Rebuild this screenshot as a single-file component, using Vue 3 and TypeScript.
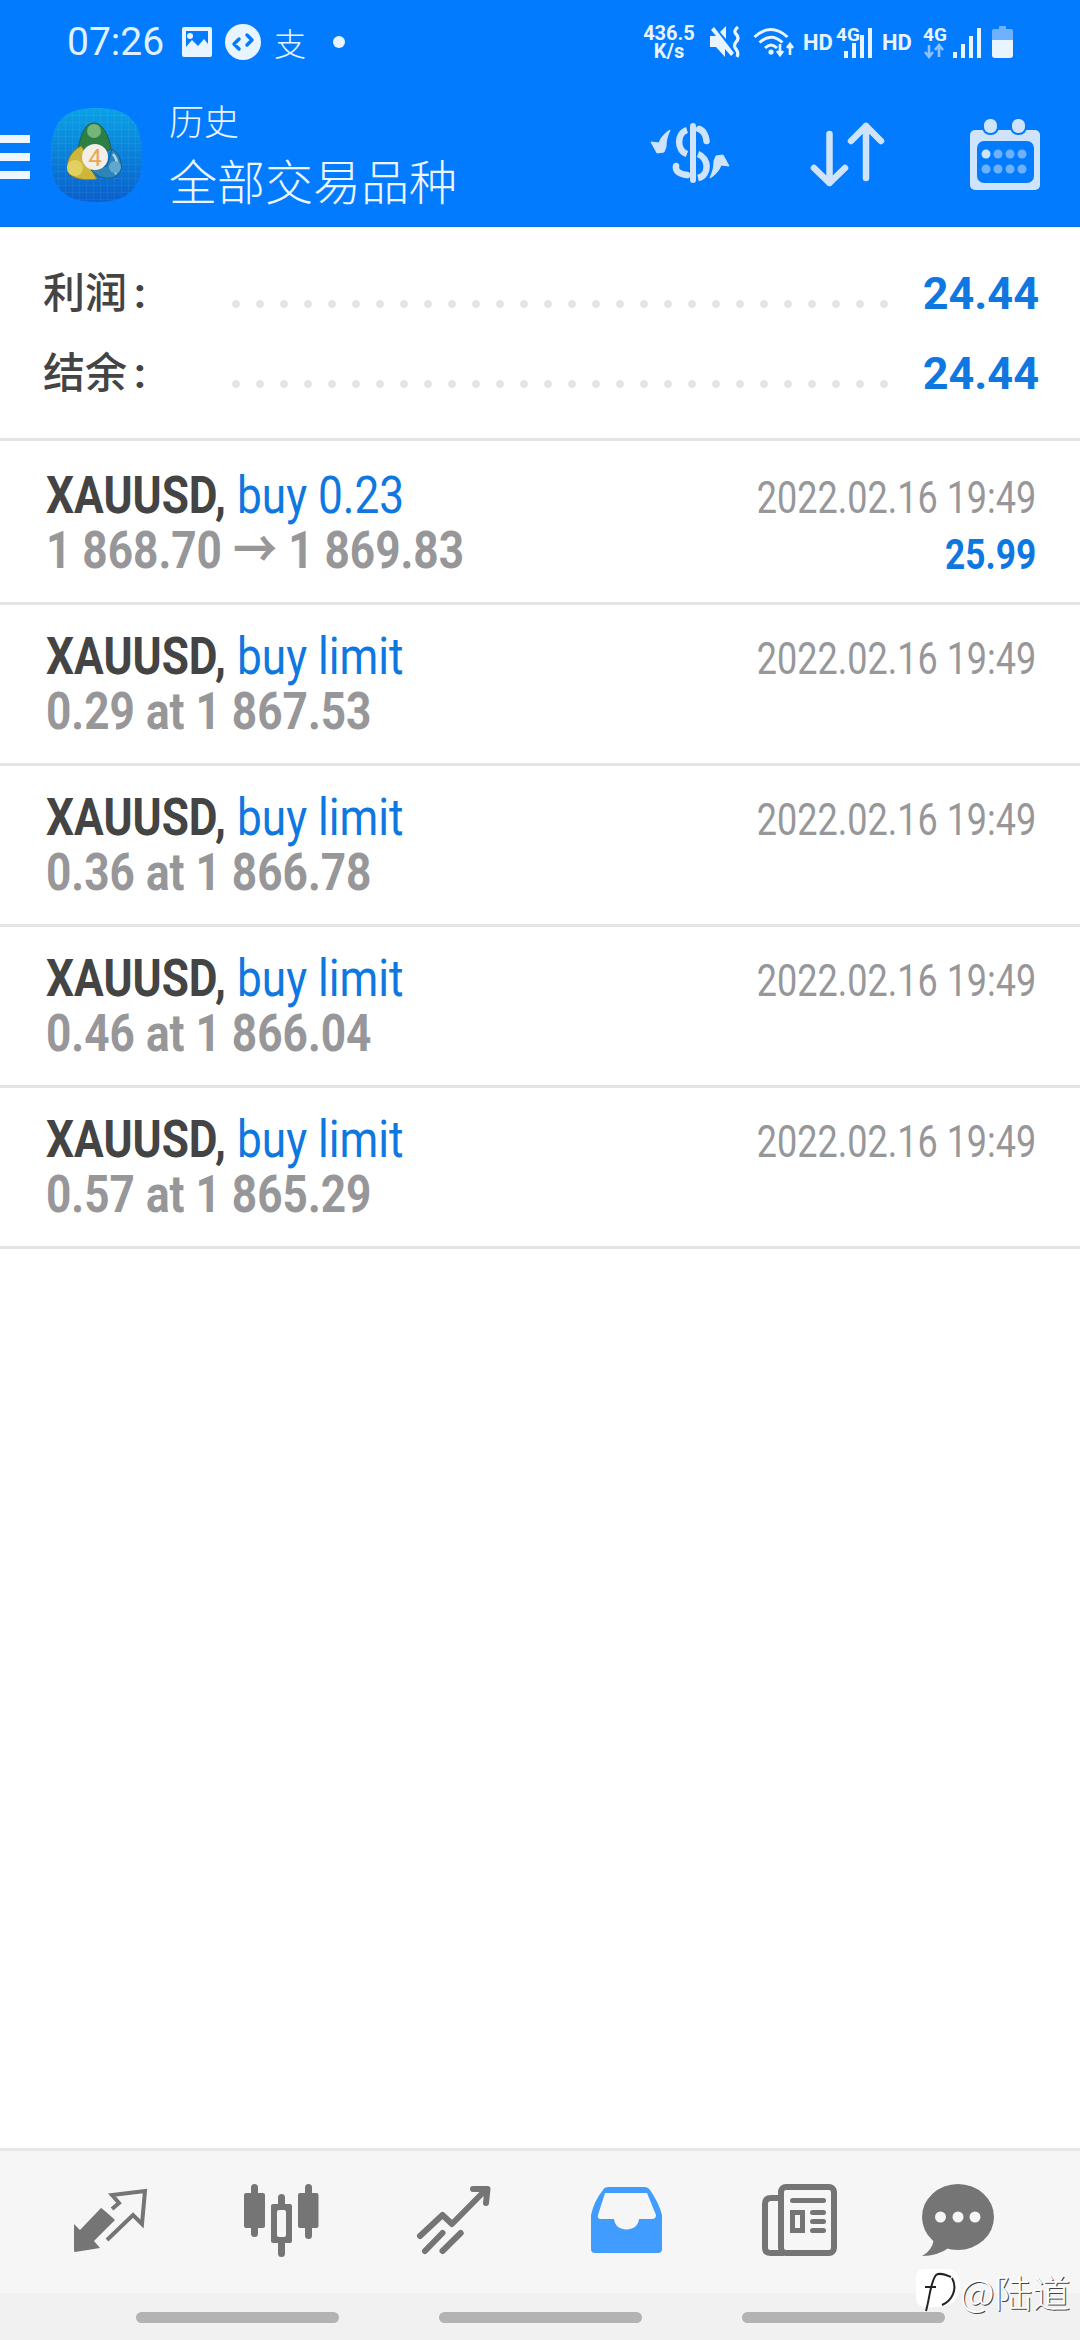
<script setup lang="ts">
interface Row { action: string; detail: string; amount?: string }
const rows: Row[] = [
  { action: 'buy 0.23', detail: '1 868.70 → 1 869.83', amount: '25.99' },
  { action: 'buy limit', detail: '0.29 at 1 867.53' },
  { action: 'buy limit', detail: '0.36 at 1 866.78' },
  { action: 'buy limit', detail: '0.46 at 1 866.04' },
  { action: 'buy limit', detail: '0.57 at 1 865.29' }
]
const summary = [
  { label: '利润', value: '24.44' },
  { label: '结余', value: '24.44' }
]
const pills = [0, 1, 2]
</script>

<template>
  <div class="page">
    <header class="header">
      <div class="status">
        <div class="status-left">
          <span class="time">07:26</span>
          <svg class="ic-image" width="30" height="30" viewBox="0 0 30 30">
            <path fill-rule="evenodd" fill="#e8f4ff" d="M2 0H28Q30 0 30 2V28Q30 30 28 30H2Q0 30 0 28V2Q0 0 2 0ZM4 4V20L10 13L16 19L22 12L26 17V4ZM8 6A3 3 0 1 1 8 12A3 3 0 1 1 8 6Z" />
          </svg>
          <svg class="ic-circle" width="36" height="36" viewBox="0 0 36 36">
            <circle cx="18" cy="18" r="18" fill="#e8f4ff" />
            <path d="M9 20L14 25M9 20L14 15M27 16L22 11M27 16L22 21" stroke="#037bff" stroke-width="3.5" fill="none" stroke-linecap="round" />
          </svg>
          <span class="zhi">支</span>
          <span class="dot"></span>
        </div>
        <div class="status-right">
          <div class="speed"><span>436.5</span><span>K/s</span></div>
          <svg class="ic-mute" width="33" height="32" viewBox="0 0 33 32">
            <path fill="#e8f4ff" d="M0 10H6L1 4L4 1L24 27L21 30L15 23V31L6 21H0ZM10 6L16 0V13Z" />
            <path d="M28 1Q23 5 26 8Q30 12 26 16Q23 20 26 23Q29 27 27 31" stroke="#e8f4ff" stroke-width="3.2" fill="none" />
          </svg>
          <svg class="ic-wifi" width="42" height="30" viewBox="0 0 42 30">
            <path d="M1.5 10Q18 -5 34.5 10M6.5 15.5Q18 5 29.5 15.5M12 21Q18 15 24 21" stroke="#e8f4ff" stroke-width="3" fill="none" />
            <circle cx="18" cy="25" r="2.6" fill="#e8f4ff" />
            <path d="M27 17V27M24 24L27 28L30 24M37 28V18M34 21L37 17L40 21" stroke="#e8f4ff" stroke-width="2.6" fill="none" />
          </svg>
          <span class="hd hd1">HD</span>
          <svg class="ic-sig1" width="36" height="40" viewBox="0 -4 36 40">
            <text x="0" y="15" class="sig-text">4G</text>
            <rect x="8" y="25" width="4" height="7" fill="#e8f4ff" />
            <rect x="16" y="17" width="4" height="15" fill="#e8f4ff" />
            <rect x="24" y="9" width="4" height="23" fill="#e8f4ff" />
            <rect x="32" y="2" width="4" height="30" fill="#e8f4ff" />
          </svg>
          <span class="hd hd2">HD</span>
          <svg class="ic-sig2" width="58" height="40" viewBox="0 -4 58 40">
            <text x="0" y="15" class="sig-text">4G</text>
            <path d="M6 19V30M2 26L6 31L10 26M16 31V20M12 24L16 19L20 24" stroke="#8fc1ff" stroke-width="2.6" fill="none" />
            <rect x="30" y="26" width="4" height="6" fill="#e8f4ff" />
            <rect x="38" y="18" width="4" height="14" fill="#e8f4ff" />
            <rect x="46" y="10" width="4" height="22" fill="#e8f4ff" />
            <rect x="54" y="2" width="4" height="30" fill="#e8f4ff" />
          </svg>
          <svg class="ic-batt" width="21" height="32" viewBox="0 0 21 32">
            <path fill="#6fb0ff" d="M7 0H14V3H19Q21 3 21 5V14H0V5Q0 3 2 3H7Z" />
            <path fill="#eaf4ff" d="M0 14H21V29Q21 32 18 32H3Q0 32 0 29Z" />
          </svg>
        </div>
      </div>
      <div class="appbar">
        <div class="burger"><i></i><i></i><i></i></div>
        <svg class="logo" width="91" height="94" viewBox="0 0 91 94">
          <defs>
            <linearGradient id="lg" x1="0" y1="0" x2="0" y2="1">
              <stop offset="0" stop-color="#0aa2e6" />
              <stop offset="1" stop-color="#0a5fcb" />
            </linearGradient>
            <pattern id="grid" width="7" height="7" patternUnits="userSpaceOnUse">
              <path d="M7 0H0V7" fill="none" stroke="#ffffff" stroke-opacity="0.1" />
            </pattern>
          </defs>
          <path fill="url(#lg)" d="M45.5 0C79 0 91 14 91 47C91 80 79 94 45.5 94C12 94 0 80 0 47C0 14 12 0 45.5 0Z" />
          <path fill="url(#grid)" d="M45.5 0C79 0 91 14 91 47C91 80 79 94 45.5 94C12 94 0 80 0 47C0 14 12 0 45.5 0Z" />
          <path fill="#2e7f46" stroke="#1f5f46" d="M43 15C52 15 58 28 60 41L44 48L27 42C29 28 34 15 43 15Z" />
          <circle cx="43" cy="23" r="7" fill="#74b57a" />
          <path fill="#cdb63a" stroke="#8c7f2a" d="M30 38C36 44 38 60 46 71C34 73 20 71 17 63C14 54 20 43 30 38Z" />
          <circle cx="24" cy="60" r="8" fill="#e2d060" />
          <path fill="#2d84b8" stroke="#155f8c" d="M61 41C70 46 73 60 68 66C60 73 48 71 40 62L56 58Z" />
          <path fill="none" stroke="#a9d5ea" stroke-width="2.5" d="M62 46C67 52 68 60 64 66" />
          <circle cx="64" cy="59" r="6" fill="#5fa7cf" />
          <circle cx="44" cy="49" r="13" fill="#f3efe8" />
          <text x="44" y="58" class="logo-four">4</text>
        </svg>
        <div class="titles">
          <div class="t1">历史</div>
          <div class="t2">全部交易品种</div>
        </div>
        <svg class="ic-dollar" width="100" height="85" viewBox="0 0 100 85">
          <rect x="50" y="13" width="6" height="60" rx="3" fill="#cfe3fb" />
          <g fill="none" stroke="#cfe3fb" stroke-width="6.5">
            <path d="M47 20C37 23 36 40 47 44" />
            <path d="M59 19C63 20 66 25 66.5 31" stroke-linecap="round" />
            <path d="M36 56C35 61 39 64 47 65" stroke-linecap="round" />
            <path d="M58 44C69 48 70 65 58 68" />
          </g>
          <g fill="#cfe3fb" stroke="#cfe3fb" stroke-width="1" stroke-linejoin="round">
            <path d="M11 32L19 33C21 27 25 23 30 20C27 27 26 31 26 37L24 42L17 43Z" />
            <path d="M11 32L19 33C21 27 25 23 30 20C27 27 26 31 26 37L24 42L17 43Z" transform="rotate(180 50 44)" />
          </g>
        </svg>
        <svg class="ic-sort" width="80" height="70" viewBox="0 0 80 70">
          <path d="M21.5 14V63M6 48L21.5 63L37 48M58 58V6M43 21L58 6L73 21" stroke="#cfe3fb" stroke-width="6.5" fill="none" stroke-linecap="round" stroke-linejoin="round" />
        </svg>
        <svg class="ic-cal" width="70" height="72" viewBox="0 0 70 72">
          <rect x="0" y="12" width="70" height="60" rx="5" fill="#cfe3fb" />
          <rect x="7" y="23" width="57" height="42" rx="7" fill="#037bff" />
          <rect x="13" y="0" width="15" height="16" rx="7" fill="#cfe3fb" stroke="#037bff" stroke-width="2" />
          <rect x="41" y="0" width="15" height="16" rx="7" fill="#cfe3fb" stroke="#037bff" stroke-width="2" />
          <circle cx="16" cy="36" r="4.5" fill="#cfe3fb" />
          <circle cx="28" cy="36" r="4.5" fill="#6fb0fb" />
          <circle cx="40" cy="36" r="4.5" fill="#6fb0fb" />
          <circle cx="52" cy="36" r="4.5" fill="#6fb0fb" />
          <circle cx="16" cy="51" r="4.5" fill="#6fb0fb" />
          <circle cx="28" cy="51" r="4.5" fill="#6fb0fb" />
          <circle cx="40" cy="51" r="4.5" fill="#6fb0fb" />
          <circle cx="52" cy="51" r="4.5" fill="#6fb0fb" />
        </svg>
      </div>
    </header>

    <section class="summary">
      <div v-for="s in summary" :key="s.label" class="sum-row">
        <span class="sum-label">{{ s.label }}<b class="colon">:</b></span>
        <span class="sum-dots"></span>
        <span class="sum-value">{{ s.value }}</span>
      </div>
    </section>

    <section class="list">
      <div v-for="(r, i) in rows" :key="i" class="row" :class="{ first: i === 0 }">
        <div class="row-left">
          <div class="line"><b class="sym">XAUUSD,</b> <span class="act">{{ r.action }}</span></div>
          <div class="line detail">{{ r.detail }}</div>
        </div>
        <div class="row-right">
          <div class="date">2022.02.16 19:49</div>
          <div v-if="r.amount" class="amount">{{ r.amount }}</div>
        </div>
      </div>
    </section>

    <div class="spacer"></div>

    <nav class="tabs">
      <svg width="100" height="90" viewBox="0 0 100 90">
        <path fill="#757575" d="M14 49L20 55L41 33Q42 33 55 45L34 66L40 73L15 77Q14 77 14 75Z" />
        <path d="M52 34L59 28L52 20L85 16L82 49L73 40L47 65" fill="none" stroke="#757575" stroke-width="4" />
      </svg>
      <svg width="100" height="90" viewBox="0 0 100 90">
        <g fill="#757575">
          <rect x="12" y="18" width="21" height="35" rx="2" />
          <rect x="19" y="9" width="7" height="53" rx="3.5" />
          <rect x="66" y="18" width="20.5" height="35" rx="2" />
          <rect x="73" y="9" width="7" height="55" rx="3.5" />
          <rect x="46" y="19" width="7" height="63" rx="3.5" />
          <rect x="39" y="29" width="21" height="39" rx="2" />
        </g>
        <rect x="45" y="35" width="9" height="27" rx="2" fill="#f6f6f6" />
      </svg>
      <svg width="100" height="90" viewBox="0 0 100 90">
        <path d="M16 61L38.5 40L48 49L81.5 15M69 14H83.5L82 28M21 76L38.5 58M38.5 76L56.7 58" fill="none" stroke="#757575" stroke-width="6" stroke-linecap="round" stroke-linejoin="round" />
      </svg>
      <svg width="100" height="90" viewBox="0 0 100 90">
        <g transform="translate(15 12)">
          <path fill="#409cff" d="M12 3Q13 0 18 0H53Q57 0 59 3Q68 16 71 28V62Q71 66 67 66H4Q0 66 0 62V28Q3 14 12 3Z" />
          <path fill="#f6f6f6" d="M14 6H56L65 28Q65 32 61 32H48C47 46 24 46 23 32H10Q6 32 7 28Z" />
        </g>
      </svg>
      <svg width="100" height="90" viewBox="0 0 100 90">
        <rect x="33" y="12" width="53" height="66" rx="5" fill="none" stroke="#757575" stroke-width="6" />
        <path d="M30 23H23Q17 23 17 29V73Q17 78 23 78H36" fill="none" stroke="#757575" stroke-width="6" />
        <g fill="#757575">
          <rect x="42" y="23" width="36" height="5" rx="2.5" />
          <path fill-rule="evenodd" d="M42 35H57V58H42ZM47 40V53H52V40Z" />
          <rect x="62" y="35" width="16" height="5" rx="2.5" />
          <rect x="62" y="44" width="16" height="5" rx="2.5" />
          <rect x="62" y="53" width="16" height="5" rx="2.5" />
        </g>
      </svg>
      <svg width="100" height="90" viewBox="0 0 100 90">
        <ellipse cx="38" cy="42" rx="36" ry="33" fill="#757575" />
        <path fill="#757575" d="M14 64Q12 76 2 81Q18 81 30 72Z" />
        <g fill="#f6f6f6">
          <circle cx="20.5" cy="42" r="5.5" />
          <circle cx="38" cy="42" r="5.5" />
          <circle cx="55" cy="42" r="5.5" />
        </g>
      </svg>
      <div class="mark">
        <svg width="44" height="44" viewBox="0 0 44 44">
          <path fill="#fff" d="M10 0H30C40 0 44 6 44 16C44 30 36 38 20 38H10C3 38 0 34 0 28V10C0 3 3 0 10 0Z" />
          <path d="M10 42C14 28 14 14 20 6C24 3 30 6 35 8M9 18H20M36 9C42 20 36 32 26 36" fill="none" stroke="#222" stroke-width="2" />
        </svg>
        <span class="mark-text">@陆道</span>
      </div>
    </nav>

    <div class="nav">
      <span v-for="p in pills" :key="p" class="pill"></span>
    </div>
  </div>
</template>

<style>
html, body { margin: 0; background: #fff; }
</style>

<style scoped>
.page {
  width: 1080px;
  height: 2340px;
  display: flex;
  flex-direction: column;
  overflow: hidden;
  background: #fff;
  font-family: Roboto, "Noto Sans CJK SC", sans-serif;
}
.header {
  height: 227px;
  box-sizing: border-box;
  background: #037bff;
  border-bottom: 1px solid #0a6fd8;
  flex: none;
}
.status {
  height: 84px;
  display: flex;
  justify-content: space-between;
  align-items: center;
  padding: 0 67px;
}
.status-left, .status-right { display: flex; align-items: center; }
.time { color: #dff1ff; font-size: 39px; width: 115px; }
.ic-circle { margin-left: 13px; }
.zhi { margin-left: 13px; color: #e8f4ff; font-size: 32px; width: 32px; font-family: "Noto Sans CJK SC", sans-serif; font-weight: 300; }
.dot { margin-left: 27px; width: 12px; height: 12px; border-radius: 50%; background: #e8f4ff; }
.speed {
  width: 52px;
  color: #e8f4ff;
  font-size: 20px;
  font-weight: 700;
  line-height: 18px;
  text-align: center;
}
.speed span { display: block; }
.ic-mute { margin-left: 15px; }
.ic-wifi { margin-left: 10px; }
.hd { color: #e8f4ff; font-size: 22px; font-weight: 700; width: 27px; }
.hd1 { margin-left: 8px; }
.ic-sig1 { margin-left: 6px; }
.hd2 { margin-left: 10px; }
.ic-sig2 { margin-left: 14px; }
.ic-batt { margin-left: 11px; }
.sig-text { fill: #e8f4ff; font-size: 19px; font-weight: 700; font-family: Roboto, sans-serif; }

.appbar {
  height: 142px;
  display: flex;
  align-items: flex-start;
  position: relative;
}
.burger { width: 30px; margin-top: 51px; display: flex; flex-direction: column; gap: 10px; }
.burger i { display: block; height: 8px; background: #eef6ff; }
.logo { margin: 24px 0 0 21px; flex: none; }
.titles { margin-left: 27px; width: 471px; color: #eef6ff; font-family: "Noto Sans CJK SC", sans-serif; font-weight: 300; }
.t1 { font-size: 35px; line-height: 40px; margin-top: 16px; }
.t2 { font-size: 48px; line-height: 60px; margin-top: 9px; }
.logo-four { font-size: 24px; fill: #eca653; text-anchor: middle; font-family: Roboto, sans-serif; }
.ic-dollar { margin-top: 26px; flex: none; }
.ic-sort { margin: 36px 0 0 68px; flex: none; }
.ic-cal { margin: 34px 0 0 82px; flex: none; }

.summary {
  height: 214px;
  box-sizing: border-box;
  padding-top: 26px;
  border-bottom: 3px solid #e4e4e4;
  flex: none;
}
.sum-row { height: 80px; display: flex; align-items: center; padding: 0 41px 0 43px; }
.sum-label {
  width: 181px;
  margin-top: -8px;
  font-family: "Noto Sans CJK SC", sans-serif;
  font-weight: 500;
  font-size: 42px;
  color: #444;
}
.colon { font-weight: 700; margin-left: 7px; font-family: Roboto, sans-serif; }
.sum-dots {
  width: 672px;
  height: 8px;
  margin-top: 22px;
  background: radial-gradient(circle, #e4e4e4 3.5px, transparent 4.2px) 0 0 / 24px 8px repeat-x;
}
.sum-value { margin-left: auto; font-size: 45px; font-weight: 700; color: #0f78e0; }

.list { flex: none; }
.row {
  height: 161px;
  box-sizing: border-box;
  border-bottom: 3px solid #e4e4e4;
  padding: 24px 44px 0 46px;
  display: flex;
  justify-content: space-between;
}
.row.first { height: 164px; padding-top: 27px; }
.row-left { width: 600px; }
.line {
  height: 55px;
  line-height: 55px;
  font-size: 52px;
  white-space: nowrap;
  transform: scaleX(0.85);
  transform-origin: left center;
}
.sym { color: #444; font-weight: 700; }
.act { color: #0f78e0; font-weight: 400; }
.detail { color: #97979a; font-weight: 700; }
.row-right { text-align: right; margin-top: 2px; }
.date {
  font-size: 45px;
  line-height: 56px;
  color: #97979a;
  white-space: nowrap;
  transform: scaleX(0.8);
  transform-origin: right center;
}
.amount {
  font-size: 42px;
  line-height: 58px;
  font-weight: 700;
  color: #0f78e0;
  transform: scaleX(0.84);
  transform-origin: right center;
}
.spacer { flex: 1; }
.tabs {
  position: relative;
  height: 145px;
  box-sizing: border-box;
  flex: none;
  background: #f6f6f6;
  border-top: 3px solid #e6e6e6;
  padding: 24px 0 0 60px;
  display: grid;
  grid-template-columns: repeat(6, 172px);
  align-content: start;
}
.mark {
  position: absolute;
  left: 916px;
  top: 112px;
  display: flex;
  align-items: center;
}
.mark-text {
  margin-left: 0;
  font-family: "Noto Sans CJK SC", sans-serif;
  font-weight: 300;
  font-size: 38px;
  color: #fff;
  text-shadow: 1px 1px 0 #444;
}
.nav {
  height: 47px;
  flex: none;
  background: #f1f1f1;
  display: flex;
  gap: 100px;
  padding: 19px 0 0 136px;
  box-sizing: border-box;
}
.pill { width: 203px; height: 11px; border-radius: 6px; background: #b3b3b3; }
</style>
